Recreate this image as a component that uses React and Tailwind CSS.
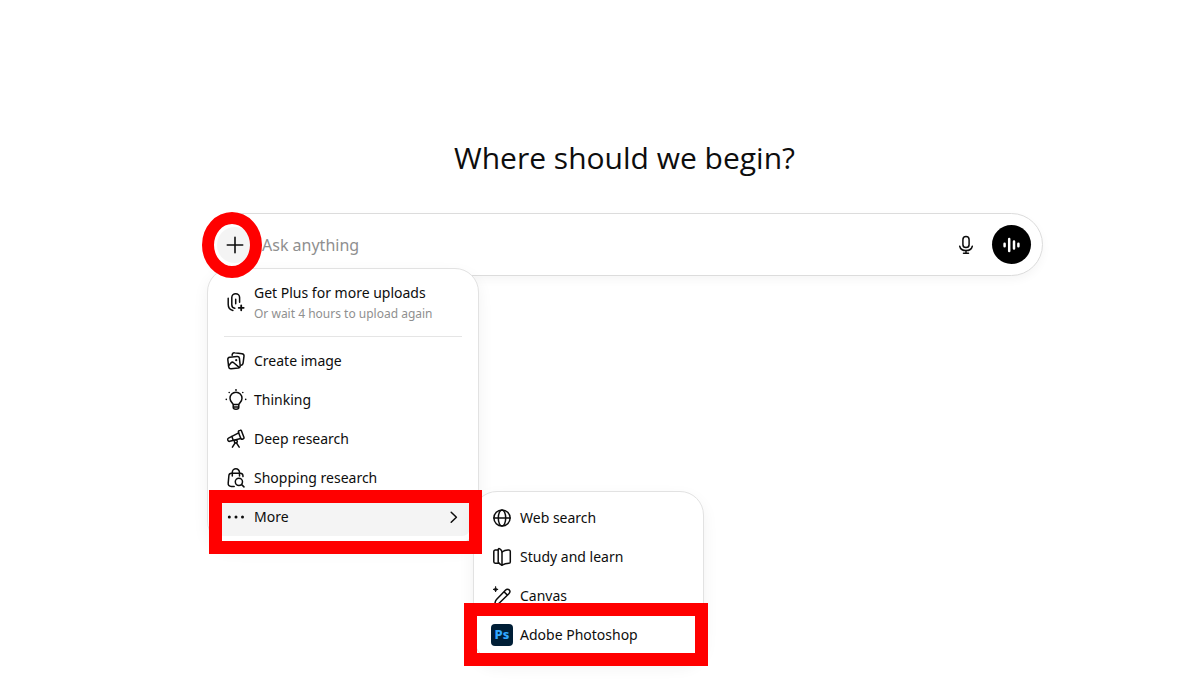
import React from "react";

function Icon({ children, className = "size-5" }) {
  return (
    <svg
      viewBox="0 0 20 20"
      fill="none"
      stroke="currentColor"
      strokeWidth="1.5"
      strokeLinecap="round"
      strokeLinejoin="round"
      aria-hidden="true"
      className={`${className} shrink-0 overflow-visible`}
    >
      {children}
    </svg>
  );
}

const UploadIcon = () => (
  <Icon>
    <path d="M13.6 10.200V5.600a3.900 3.900 0 0 0-7.800 0v7.200c0 2 1 3.200 3 3.500" />
    <path d="M9.700 7.200v4.600M2.200 6.300v5.900c0 3.500 1.600 5.600 4.700 6.200" />
    <path d="M15.200 13.300v5M12.700 15.800h5" strokeWidth="1.800" />
  </Icon>
);

const ImagesIcon = () => (
  <Icon>
    <path d="M6.100 4.200 6.400 3c.3-1.100 1-1.500 2.200-1.300l7.400 1c1.400.2 2.200 1.100 2 2.500l-.9 7c-.2 1.300-.8 1.900-1.900 2" />
    <path d="M3.700 6.200 11 5.400c1.400-.1 2.200.5 2.400 1.800l.8 7.400c.1 1.400-.5 2.200-1.900 2.400l-7.200.8c-1.400.1-2.200-.5-2.400-1.900L1.800 8.600c-.1-1.400.5-2.200 1.900-2.400Z" />
    <path d="m2.600 14.800 2.500-3c.8-.9 1.700-.9 2.600-.1l5.400 4.700" />
    <circle cx="10.200" cy="9.200" r="1.100" fill="currentColor" stroke="none" />
  </Icon>
);

const BulbIcon = () => (
  <Icon>
    <path d="M7.100 14.600c-.1-.9-.6-1.400-1.200-2a6 6 0 1 1 8.200 0c-.6.6-1.100 1.100-1.200 2ZM7.200 15v2.200c0 1.200.9 2 2.800 2s2.800-.8 2.800-2V15M7.200 16.900h5.600" />
    <g fill="currentColor" stroke="none">
      <circle cx="10" cy="0" r=".9" />
      <circle cx="3.200" cy="2.500" r=".8" />
      <circle cx="16.800" cy="2.500" r=".8" />
      <circle cx=".3" cy="9.400" r=".8" />
      <circle cx="19.700" cy="9.400" r=".8" />
    </g>
  </Icon>
);

const TelescopeIcon = () => (
  <Icon>
    <path d="m2.500 9.100 10.200-5.200 2.100 5.500-11 2.900c-.9.200-1.500 0-1.800-.8l-.3-.8c-.3-.7.1-1.200.8-1.600Z" />
    <path d="m12.700 3.900-.3-.8c-.2-.7 0-1.100.6-1.400l1.100-.4c.7-.3 1.100-.1 1.400.6l2.500 6.500c.2.700 0 1.100-.6 1.400l-1.100.4c-.6.2-1.100 0-1.300-.6M5.900 7.500l1.300 3.700" />
    <circle cx="9.800" cy="12.600" r="1.500" fill="white" />
    <path d="m9 14.100-2.600 4.100M10.600 14.100l2.600 4.100" />
  </Icon>
);

const BagSearchIcon = () => (
  <Icon>
    <path d="M8.200 18.400H5.300c-2.200 0-3.300-1.200-3.100-3.300l.7-7.600c.1-1.500 1-2.300 2.500-2.300h9c1.500 0 2.300.7 2.500 2.200l.1 1.200" />
    <path d="M6.300 8V4.400a3.600 3.600 0 0 1 7.200 0V8" />
    <circle cx="12.900" cy="13.800" r="3.600" />
    <path d="m15.600 16.600 2.400 2.300" />
  </Icon>
);

const DotsIcon = () => (
  <Icon>
    <g fill="currentColor" stroke="none">
      <circle cx="3.300" cy="10" r="1.500" />
      <circle cx="10" cy="10" r="1.500" />
      <circle cx="16.500" cy="10" r="1.500" />
    </g>
  </Icon>
);

const GlobeIcon = () => (
  <Icon>
    <circle cx="10" cy="10" r="8.100" />
    <ellipse cx="10" cy="10" rx="3.700" ry="8.100" />
    <path d="M1.900 10h16.200" />
  </Icon>
);

const BookIcon = () => (
  <Icon>
    <path d="M10 18.200V5c2-1.500 4.600-2.100 7-1.900.9.100 1.300.6 1.300 1.400v10.400c0 .9-.5 1.400-1.400 1.400-2.600 0-4.700.6-6.900 1.900Z" />
    <path d="M10 18.200c-1.500-.7-2.900-1.700-3.800-3V2.600c0-1.100.7-1.400 1.600-.8C9.100 2.700 10 3.800 10 5" />
    <path d="M6.200 3.100c-1-.1-2-.1-3 0-.9.100-1.400.6-1.400 1.500v10.200c0 .9.500 1.400 1.400 1.400h3.600" />
  </Icon>
);

const CanvasIcon = () => (
  <Icon>
    <path d="M4.500 13.600 13.400 4.200c1.300-1.300 2.700-1.400 3.800-.3 1.100 1.200 1 2.500-.3 3.800l-9.300 9c-.7.700-1.500 1.100-2.500 1.300l-2.300.5.400-2.300c.2-1 .6-1.800 1.300-2.600ZM12 5.800l3.400 3.300" />
    <path d="M3.600.9c.2 1.600.9 2.300 2.500 2.500-1.600.2-2.300.9-2.500 2.500-.2-1.600-.9-2.300-2.500-2.500C2.700 3.200 3.400 2.500 3.600.9Z" fill="currentColor" strokeWidth=".9" />
  </Icon>
);

const PhotoshopIcon = () => (
  <span
    aria-hidden="true"
    className="-mx-px flex size-[22px] shrink-0 items-center justify-center rounded bg-[#001e36] text-[13px] font-extrabold text-[#31a8ff]"
  >
    Ps
  </span>
);

const MicIcon = () => (
  <Icon>
    <rect x="6.900" y="1.600" width="6.200" height="11" rx="3.100" />
    <path d="M3.700 11.200c.7 2.800 3 4.400 6.300 4.400s5.600-1.600 6.300-4.400M10 15.600v2.600M7.500 18.300h5" />
  </Icon>
);

const tools = [
  { label: "Create image", icon: ImagesIcon },
  { label: "Thinking", icon: BulbIcon },
  { label: "Deep research", icon: TelescopeIcon },
  { label: "Shopping research", icon: BagSearchIcon },
];

const moreTools = [
  { label: "Web search", icon: GlobeIcon },
  { label: "Study and learn", icon: BookIcon },
  { label: "Canvas", icon: CanvasIcon },
  { label: "Adobe Photoshop", icon: PhotoshopIcon, marked: true },
];

function MenuRow({ label, icon: RowIcon, active, children }) {
  return (
    <button
      type="button"
      className={`flex h-[39px] w-full items-center gap-2 rounded-lg px-[10px] text-left ${active ? "bg-[#f4f4f4]" : ""}`}
    >
      <RowIcon />
      <span className="grow">{label}</span>
      {children}
    </button>
  );
}

function MoreMenu() {
  return (
    <ul className="absolute -top-[6px] left-[257px] w-[231px] rounded-3xl border border-[#e2e2e2] bg-white px-2 py-[6px] shadow-[0_6px_16px_rgba(0,0,0,0.06)]">
      {moreTools.map((tool) => (
        <li key={tool.label} className="relative">
          <MenuRow label={tool.label} icon={tool.icon} />
          {tool.marked && (
            <div className="pointer-events-none absolute -right-[13px] -left-[18px] -inset-y-3 border-[13px] border-[#ff0000]" />
          )}
        </li>
      ))}
    </ul>
  );
}

function ToolsMenu() {
  return (
    <div className="absolute top-[54px] left-0 w-[272px] rounded-3xl border border-[#e2e2e2] bg-white p-2 shadow-[0_6px_16px_rgba(0,0,0,0.06)]">
      <button type="button" className="flex w-full items-center gap-2 px-[10px] py-1 text-left">
        <UploadIcon />
        <span className="flex flex-col">
          <span className="leading-6">Get Plus for more uploads</span>
          <span className="text-xs leading-[18px] text-[#8f8f8f]">Or wait 4 hours to upload again</span>
        </span>
      </button>
      <hr className="mx-2 mt-[9px] mb-1 border-[#e5e5e5]" />
      <ul>
        {tools.map((tool) => (
          <li key={tool.label}>
            <MenuRow label={tool.label} icon={tool.icon} />
          </li>
        ))}
        <li className="relative">
          <MenuRow label="More" icon={DotsIcon} active>
            <Icon className="size-4">
              <path d="m9 4 6.500 6.300L9 16.600" strokeWidth="1.900" />
            </Icon>
          </MenuRow>
          <MoreMenu />
          <div className="pointer-events-none absolute -top-[7px] -right-3 -bottom-[18px] -left-[7px] border-[13px] border-[#ff0000]" />
        </li>
      </ul>
    </div>
  );
}

export default function App() {
  return (
    <main className="flex min-h-screen flex-col items-center bg-white pt-[138px] pl-[66px] font-['Noto_Sans','Open_Sans',sans-serif] text-sm text-[#0d0d0d]">
      <h1 className="font-['Open_Sans','Noto_Sans',sans-serif] text-[30px] leading-10">Where should we begin?</h1>
      <form
        onSubmit={(event) => event.preventDefault()}
        className="relative mt-[35px] flex h-[63px] w-full max-w-[837px] items-center rounded-full border border-[#dcdcdc] bg-white pr-[11px] pl-[10px] shadow-[0_4px_10px_rgba(0,0,0,0.04)]"
      >
        <ToolsMenu />
        <div className="relative">
          <button
            type="button"
            aria-label="Add files and tools"
            className="flex size-9 items-center justify-center rounded-full bg-[#f4f4f4]"
          >
            <Icon>
              <path d="M10 2.300v15.400M2.300 10h15.400" strokeWidth="1.600" />
            </Icon>
          </button>
          <div className="pointer-events-none absolute -top-[15px] -left-[15px] h-[66px] w-[60px] rounded-[50%] border-[12px] border-[#ff0000]" />
        </div>
        <input
          type="text"
          aria-label="Ask anything"
          placeholder="Ask anything"
          className="ml-[9px] min-w-0 grow bg-transparent text-base outline-none placeholder:text-[#8f8f8f]"
        />
        <button type="button" aria-label="Dictate" className="mr-2 flex size-9 items-center justify-center">
          <MicIcon />
        </button>
        <button
          type="button"
          aria-label="Start voice mode"
          className="flex size-[39px] items-center justify-center rounded-full bg-black text-white"
        >
          <Icon>
            <path d="M2.600 8.700v2.600M7.200 4v12M12 6.500v7M16.400 8.700v2.600" strokeWidth="2.500" />
          </Icon>
        </button>
      </form>
    </main>
  );
}
